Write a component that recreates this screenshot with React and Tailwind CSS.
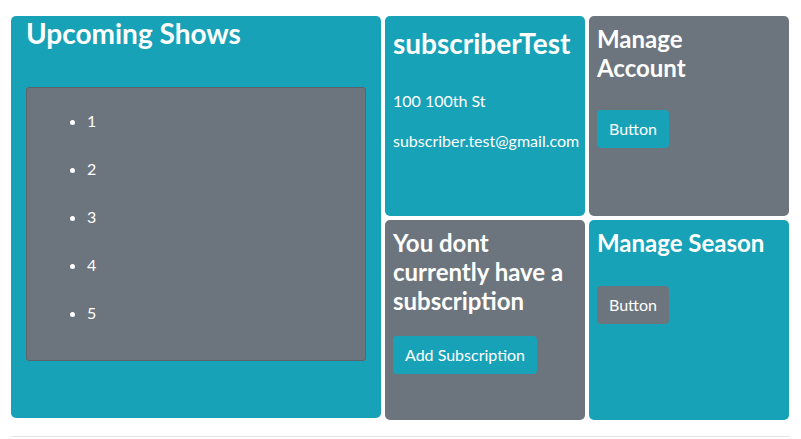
import React from "react";

const shows = ["1", "2", "3", "4", "5"];

function Btn({ children, tone }) {
  const bg = tone === "gray" ? "bg-[#6c757d]" : "bg-[#17a2b8]";
  return (
    <button className={`${bg} text-white text-[16px] leading-6 px-3 py-[7px] rounded-[4px]`}>
      {children}
    </button>
  );
}

export default function App() {
  return (
    <div className="bg-white min-h-screen font-['Lato','Liberation_Sans',sans-serif] text-white">
      <div className="px-[11px] pt-[16px]">
        <div className="flex gap-[4px]">
          {/* Upcoming shows */}
          <div className="w-[370px] h-[402px] bg-[#17a2b8] rounded-[5px] px-[15px]">
            <h3 className="text-[28px] font-bold leading-[34px]">Upcoming Shows</h3>
            <div className="mt-[37px] h-[274px] bg-[#6c757d] border border-[#5c636a] rounded-[3px]">
              <ul className="list-disc pl-[60px] pt-[21px] space-y-6">
                {shows.map((s) => (
                  <li key={s} className="text-[16px] leading-6">{s}</li>
                ))}
              </ul>
            </div>
          </div>

          <div className="grid grid-cols-[200px_200px] grid-rows-[200px_200px] gap-[4px]">
            {/* Account info */}
            <div className="bg-[#17a2b8] rounded-[5px] p-2">
              <h3 className="text-[28px] font-bold leading-[34px] pt-[2px]">subscriberTest</h3>
              <p className="text-[16px] leading-6 mt-[29px]">100 100th St</p>
              <p className="text-[16px] leading-6 mt-[16px] whitespace-nowrap">subscriber.test@gmail.com</p>
            </div>

            {/* Manage account */}
            <div className="bg-[#6c757d] rounded-[5px] p-2">
              <h4 className="text-[24px] font-bold leading-[29px]">
                Manage
                <br />
                Account
              </h4>
              <div className="mt-[28px]">
                <Btn>Button</Btn>
              </div>
            </div>

            {/* Subscription */}
            <div className="bg-[#6c757d] rounded-[5px] p-2">
              <h4 className="text-[24px] font-bold leading-[29px] pr-2">
                You dont currently have a subscription
              </h4>
              <div className="mt-[21px]">
                <Btn>Add Subscription</Btn>
              </div>
            </div>

            {/* Manage season */}
            <div className="bg-[#17a2b8] rounded-[5px] p-2">
              <h4 className="text-[24px] font-bold leading-[29px]">Manage Season</h4>
              <div className="mt-[29px]">
                <Btn tone="gray">Button</Btn>
              </div>
            </div>
          </div>
        </div>
        <hr className="mt-[16px] border-t border-[#e5e5e5]" />
      </div>
    </div>
  );
}
